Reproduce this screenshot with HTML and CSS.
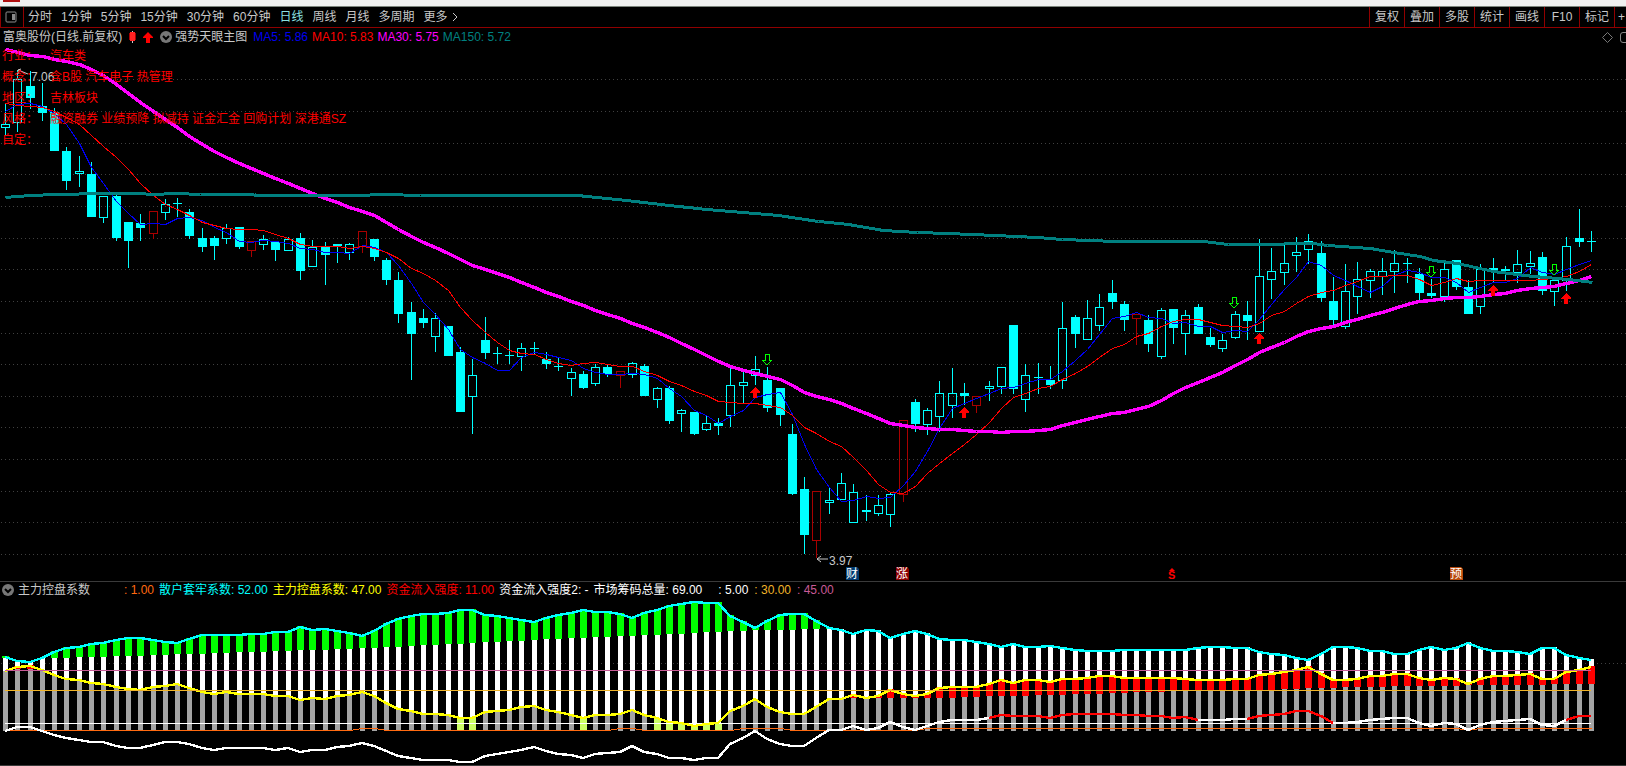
FILE: index.html
```html
<!DOCTYPE html>
<html lang="zh-CN">
<head>
<meta charset="utf-8">
<title>富奥股份 日线</title>
<link rel="stylesheet" href="styles.css">
</head>
<body>
<div class="titlebar"><span class="titlebar-logo"></span></div>

<nav class="toolbar">
  <button class="panel-toggle" type="button" aria-label="侧栏">
    <svg width="12" height="12" viewBox="0 0 12 12"><rect x="1" y="1" width="10" height="10" rx="1" fill="none" stroke="#8c8c8c"/><rect x="7" y="3" width="3" height="6" fill="#8c8c8c"/></svg>
  </button>
  <div class="periods">
    <button type="button">分时</button>
    <button type="button">1分钟</button>
    <button type="button">5分钟</button>
    <button type="button">15分钟</button>
    <button type="button">30分钟</button>
    <button type="button">60分钟</button>
    <button type="button" class="active">日线</button>
    <button type="button">周线</button>
    <button type="button">月线</button>
    <button type="button">多周期</button>
    <button type="button" class="more">更多<svg width="6" height="10" viewBox="0 0 6 10"><path d="M1 1l4 4-4 4" fill="none" stroke="#c8c8c8"/></svg></button>
  </div>
  <div class="tools">
    <button type="button">复权</button>
    <button type="button">叠加</button>
    <button type="button">多股</button>
    <button type="button">统计</button>
    <button type="button">画线</button>
    <button type="button">F10</button>
    <button type="button">标记</button>
    <button type="button" class="cut">+自选</button>
  </div>
</nav>

<main>
  <section class="main-chart">
    <header class="legend">
      <span class="stock">富奥股份(日线.前复权)</span>
      <span class="icons">
        <svg width="7" height="12" viewBox="0 0 7 12" shape-rendering="crispEdges"><path d="M3 0h1v12H3z" fill="#ccc"/><path d="M0 2h7v7H0z" fill="#a00"/><path d="M1 1h5v9H1z" fill="#f22"/></svg>
        <svg width="10" height="11" viewBox="0 0 10 11"><path d="M5 0l5 5v1H7v5H3V6H0V5z" fill="#f00"/></svg>
        <svg width="12" height="12" viewBox="0 0 12 12"><circle cx="6" cy="6" r="6" fill="#777"/><path d="M3 5l3 3 3-3" fill="none" stroke="#000" stroke-width="2"/></svg>
      </span>
      <span>强势天眼主图</span>
      <span class="averages">
        <span class="ma5">MA5: 5.86</span>
        <span class="ma10">MA10: 5.83</span>
        <span class="ma30">MA30: 5.75</span>
        <span class="ma150">MA150: 5.72</span>
      </span>
      <span class="corner">
        <svg width="11" height="11" viewBox="0 0 11 11"><path d="M5.500 .5l5 5-5 5-5-5z" fill="none" stroke="#777"/></svg>
        <svg width="6" height="11" viewBox="0 0 6 11"><path d="M6 0.500H3Q0.500 0.500 0.500 3V8Q0.500 10.500 3 10.500H6" fill="none" stroke="#888"/></svg>
      </span>
    </header>
    <svg id="candles" class="chart" viewBox="0 46 1626 535" shape-rendering="crispEdges"></svg>
    <dl class="tags">
      <dt>行业：</dt><dd>汽车类</dd>
      <dt>概念：</dt><dd>含B股 汽车电子 热管理</dd>
      <dt>地区：</dt><dd>吉林板块</dd>
      <dt>风格：</dt><dd>融资融券 业绩预降 拟减持 证金汇金 回购计划 深港通SZ</dd>
      <dt>自定：</dt><dd></dd>
    </dl>
  </section>

  <section class="sub-chart">
    <header class="legend">
      <svg width="12" height="12" viewBox="0 0 12 12"><circle cx="6" cy="6" r="6" fill="#777"/><path d="M3 5l3 3 3-3" fill="none" stroke="#000" stroke-width="2"/></svg>
      <span class="sub-name">主力控盘系数</span>
      <span class="values">
        <span class="orange">: 1.00</span>
        <span class="cyan">散户套牢系数: 52.00</span>
        <span class="yellow">主力控盘系数: 47.00</span>
        <span class="red">资金流入强度: 11.00</span>
        <span class="white">资金流入强度2: -</span>
        <span class="white">市场筹码总量: 69.00</span>
      </span>
      <span class="levels">
        <span class="white">: 5.00</span>
        <span class="gold">: 30.00</span>
        <span class="pink">: 45.00</span>
      </span>
    </header>
    <svg id="control" class="chart" viewBox="0 600 1626 165" shape-rendering="crispEdges"></svg>
  </section>
</main>
<script src="chart.js"></script>
</body>
</html>
```

FILE: styles.css
```css
* { box-sizing: border-box; }

body {
  margin: 0;
  background: #000;
  color: #c8c8c8;
  font: 12px/18px "Liberation Sans", "Noto Sans CJK SC", sans-serif;
  overflow: hidden;
}

button {
  border: 0;
  padding: 0;
  background: none;
  color: inherit;
  font: inherit;
  white-space: nowrap;
}

svg { display: block; flex: none; }

.titlebar {
  height: 7px;
  padding-left: 3px;
  background: #f0f0f0;
  border-bottom: 1px solid #7c847c;
}
.titlebar-logo {
  display: block;
  width: 17px;
  height: 2px;
  background: #b01010;
}

.toolbar {
  display: flex;
  height: 21px;
  border-bottom: 1px solid #900000;
  border-left: 1px solid #900000;
  overflow: hidden;
}
.panel-toggle {
  display: flex;
  align-items: center;
  padding: 0 6px 0 4px;
  border-right: 1px solid #900000;
}
.periods {
  display: flex;
  flex: 1;
  gap: 9px;
  padding-left: 4px;
}
.active { color: #8ce0e0; }
.more { display: flex; align-items: center; gap: 4px; }

.tools { display: flex; }
.tools button {
  width: 35px;
  border-left: 1px solid #900000;
}
.tools .cut {
  width: 12px;
  padding-left: 3px;
  overflow: hidden;
  text-align: left;
}

.legend {
  display: flex;
  align-items: center;
  height: 18px;
  white-space: nowrap;
}

.main-chart {
  position: relative;
  border-bottom: 1px solid #3a3a3a;
}
.main-chart .legend { padding-left: 3px; }
.icons {
  display: flex;
  align-items: center;
  gap: 7px;
  margin: 0 3px 0 7px;
}
.averages { display: flex; gap: 4px; margin-left: 6px; }
.ma5 { color: #0000f0; }
.ma10 { color: #f00; }
.ma30 { color: #f0f; }
.ma150 { color: #008080; }
.corner {
  display: flex;
  gap: 7px;
  margin-left: auto;
}

.chart { width: 100%; height: auto; }
.chart text { font: 12px "Liberation Sans", "Noto Sans CJK SC", sans-serif; }
.chart .dividend { font-size: 11px; font-weight: bold; }

.tags {
  position: absolute;
  top: 18px;
  left: 2px;
  display: grid;
  grid-template-columns: 48px auto;
  grid-auto-rows: 21px;
  margin: 0;
  line-height: 20px;
  color: #f00;
}
.tags dd { margin: 0; }

.sub-chart { border-bottom: 1px solid #3a3a3a; }
.sub-chart .legend { padding: 0 0 2px 2px; }
.sub-name { width: 106px; margin-left: 4px; }
.values { display: flex; gap: 5px; }
.levels { display: flex; gap: 6px; margin-left: 16px; }

.orange { color: #ff6a10; }
.cyan { color: #0ff; }
.yellow { color: #ff0; }
.red { color: #f00; }
.white { color: #fff; }
.gold { color: #f0b428; }
.pink { color: #c85a96; }
```

FILE: chart.js
```js
const COUNT = 130;
const xAt = i => Math.round(5 + 12.295 * i);

// [high, body top, body bottom, low, kind]; f = filled, h = hollow, r = red hollow
const candles = `103 124 128 135 h|70 79 123 132 h|71 86 98 109 f|83 106 113 121 f|108 112 151 151 f|147 151 181 190 f|156 171 174 187 h|162 174 217 217 f|196 196 218 223 h|195 196 238 241 f
222 222 241 268 f|214 223 228 241 f|211 211 234 239 r|199 204 213 220 h|198 203 204 217 f|209 212 236 239 f|228 238 247 252 f|236 238 246 260 f|224 228 239 244 h|227 227 247 249 f
241 241 251 257 r|235 239 245 250 h|242 242 250 261 f|237 239 251 251 h|233 238 271 280 f|240 247 267 267 h|242 247 255 285 f|244 244 246 263 f|243 244 253 260 h|231 231 247 253 r
239 239 257 261 f|258 260 280 285 f|272 280 314 323 f|302 312 334 380 f|309 318 323 328 f|313 318 337 352 h|326 326 356 356 f|347 352 412 412 f|359 375 397 434 h|317 340 353 359 f
347 353 354 364 f|340 355 356 364 f|343 348 357 371 h|342 348 349 355 f|352 359 364 369 f|358 366 367 371 f|368 372 379 396 h|371 374 388 389 f|364 367 384 386 h|365 367 374 377 f
371 371 376 388 r|362 363 375 378 h|364 366 396 396 f|387 388 400 408 h|386 388 421 424 f|409 410 414 432 h|412 412 434 435 f|416 423 430 431 h|418 423 426 435 f|368 385 416 427 h
372 382 386 403 h|356 369 376 385 h|367 380 408 412 f|388 388 415 426 f|424 434 494 495 f|477 489 535 554 f|491 491 541 558 r|488 500 503 514 h|473 483 500 500 h|484 492 523 523 h
495 510 512 521 f|495 505 514 516 h|492 494 515 527 h|420 420 495 502 r|399 402 424 432 f|408 410 425 435 h|381 393 417 432 h|368 393 406 418 h|383 393 396 405 f|396 396 406 413 r
381 386 389 401 h|367 367 387 394 h|325 325 389 394 f|364 375 400 412 h|363 377 378 394 f|366 380 385 389 f|302 328 381 389 h|315 317 334 348 f|300 318 340 340 h|294 307 326 331 h
280 293 302 309 f|301 304 320 331 f|314 314 319 345 r|315 320 344 352 f|308 310 357 359 h|309 309 328 344 f|310 315 334 355 h|304 307 334 334 f|328 337 345 347 f|334 340 349 352 h
311 314 338 339 h|301 315 321 340 f|239 276 332 332 h|248 271 280 299 h|245 263 273 285 h|237 252 256 272 h|234 241 250 264 h|241 253 298 302 f|277 301 320 325 f|264 291 327 329 h
262 279 297 314 h|269 271 281 298 h|258 271 277 295 h|250 263 272 293 h|258 263 264 283 f|268 274 293 300 f|279 293 296 298 f|263 269 297 302 h|260 260 287 290 f|280 287 314 314 f
264 269 307 314 h|258 268 270 282 f|266 269 271 280 f|250 264 273 283 h|251 263 267 274 h|252 257 291 295 f|278 280 292 306 h|237 246 281 291 h|209 238 242 247 f|231 241 242 252 f`
  .split(/[|\n]/)
  .map(s => { const [h, t, b, l, k] = s.trim().split(' '); return { h: +h, t: +t, b: +b, l: +l, k }; });

const closes = candles.map(c => (c.k === 'f' ? c.b : c.t));

function average(n, lead) {
  return closes.map((_, i) =>
    i < n - 1 ? lead[i] : Math.round(closes.slice(i - n + 1, i + 1).reduce((a, b) => a + b, 0) / n));
}

const ma5 = average(5, [111, 104, 103, 106]);
const ma10 = average(10, [103, 105, 106, 107, 111, 117, 124, 135, 146]);
const ma30 = average(30, [49, 52, 55, 56, 59, 61, 64, 69, 75, 84, 93, 102, 111, 119, 127, 136, 144, 151, 157, 163, 168, 173, 178, 183, 188, 193, 198, 202, 207]);
const ma150 = '5,197 17,196 30,195 55,194 103,193 140,193 150,194 177,193 200,194 307,195 355,195 385,194 420,195 577,195 626,200 669,205 706,209 743,212 778,215 818,221 848,224 883,230 917,232 947,233 995,235 1037,237 1062,239 1116,241 1203,241 1228,244 1277,244 1290,243 1313,243 1327,245 1370,248 1393,252 1420,256 1433,260 1457,263 1475,267 1493,271 1533,276 1557,278 1577,280 1592,282';

const rect = (x, y, w, h, fill) => `<rect x="${x}" y="${y}" width="${w}" height="${h}" fill="${fill}"/>`;
const poly = (pts, stroke, w) => `<polyline points="${pts}" fill="none" stroke="${stroke}" stroke-width="${w}" stroke-linejoin="round"/>`;
const points = (ys, from = 0) => ys.map((y, i) => `${xAt(i + from)},${y}`).join(' ');
const dots = y => `<path d="M1 ${y + 0.5}H1626" stroke="#404040" stroke-dasharray="1 3"/>`;

function drawCandles() {
  let out = '';
  for (let k = 0; k < 16; k++) out += dots(Math.floor(79.8 + 31.65 * k));
  candles.forEach((c, i) => {
    const x = xAt(i);
    const color = c.k === 'r' ? '#a80000' : '#00ffff';
    if (c.t > c.h) out += rect(x, c.h, 1, c.t - c.h, color);
    if (c.l > c.b) out += rect(x, c.b, 1, c.l - c.b, color);
    if (c.k === 'f') {
      out += rect(x - 4, c.t, 9, c.b - c.t, color);
    } else {
      out += `<path d="M${x - 4} ${c.t}h9v${c.b - c.t}h-9zm1 1v${c.b - c.t - 2}h7v-${c.b - c.t - 2}z" fill="${color}" fill-rule="evenodd"/>`;
    }
  });
  out += '<g transform="translate(.5 .5)">';
  out += poly(points(ma5), '#0000f0', 1);
  out += poly(points(ma10), '#ff0000', 1);
  out += poly(points(ma30), '#ff00ff', 3.4);
  out += poly(ma150, '#008080', 3);
  out += '</g>';

  [[755, 387], [964, 407], [1259, 333], [1493, 285], [1566, 293]].forEach(([x, y]) => {
    out += `<path d="M${x} ${y}l5 5v1h-3v5h-4v-5h-3v-1z" fill="#ff0000"/>`;
  });
  [[767, 354], [1234, 297], [1431, 266], [1554, 264]].forEach(([x, y]) => {
    out += `<path d="M${x - 2} ${y}h4v6h3l-5 5-5-5h3z" fill="none" stroke="#00ff00"/>`;
  });

  out += '<g shape-rendering="auto">';
  out += '<path d="M28 74L18 70M21 69l-3 1 1 4M828 559H817M821 556l-4 3 4 3" fill="none" stroke="#c8c8c8"/>';
  out += '<text x="31" y="81" fill="#c8c8c8">7.06</text><text x="829" y="565" fill="#c8c8c8">3.97</text>';
  [[846, '财', '#003a70'], [896, '涨', '#8b0000'], [1450, '预', '#b84a0c']].forEach(([x, s, c]) => {
    out += `<path d="M${x} 567h11l2 2v11h-13z" fill="${c}"/><text x="${x}" y="578" fill="#fff">${s}</text>`;
  });
  out += '<text x="1168" y="579" fill="#ff0000" class="dividend">S</text><path d="M1169 571l3-3 3 3z" fill="#ff0000"/>';
  out += '</g>';
  document.getElementById('candles').innerHTML = out;
}

// Vertical position of each indicator line, one value for each candle.
const retail = [657,661,662,658,652,648,647,644,643,640,638,638,640,642,643,639,635,635,635,635,634,634,632,632,627,630,629,631,633,636,631,624,619,616,614,614,613,610,610,615,616,618,620,622,618,615,613,610,612,612,614,618,613,610,606,604,602,603,603,616,622,628,621,615,614,614,621,628,630,634,630,631,638,634,631,634,639,640,640,642,644,647,644,647,647,646,648,650,651,651,651,650,650,650,650,650,650,648,647,647,648,648,652,654,655,658,660,654,647,647,648,651,651,654,654,650,647,650,648,643,648,651,651,652,654,648,648,655,658,660];
const main = [671,667,666,670,675,679,680,683,684,687,689,690,687,686,684,688,692,694,692,694,694,694,696,696,700,698,699,696,695,692,696,703,709,711,714,714,715,718,718,712,711,710,707,706,710,712,715,718,715,715,714,710,715,718,722,723,726,724,723,711,706,699,707,712,714,714,707,699,699,695,698,696,690,694,696,694,688,687,687,687,684,680,683,680,680,682,679,679,678,676,676,678,678,678,678,678,679,680,680,680,679,679,675,674,672,670,667,674,680,680,679,676,676,674,674,678,680,678,679,684,679,676,676,675,674,679,679,672,670,667];
const flow = [731,727,727,731,735,738,740,742,742,746,748,748,745,742,742,744,748,750,748,748,748,748,750,748,752,750,750,747,746,743,746,751,756,758,760,760,760,762,762,756,754,752,750,747,751,754,755,758,754,753,752,746,752,754,758,758,760,758,758,744,738,731,739,744,746,746,738,730,730,726,730,728,722,727,730,726,722,720,720,720,718,715,716,716,716,718,715,714,714,714,714,715,715,716,716,718,717,720,720,720,719,719,716,715,714,711,711,716,723,723,722,720,719,718,718,723,726,723,724,730,725,722,721,720,719,725,726,720,716,716];

// Half of the chip total, as [index, y]; the trapped-retail limit mirrors it.
const limitKeys = [[0, 669], [4, 669], [10, 671], [20, 675], [30, 679], [33, 681], [43, 687], [47, 689], [51, 691], [56, 694], [59, 696], [67, 698], [76, 698], [81, 696], [85, 695], [93, 692], [98, 690], [102, 690], [106, 688], [115, 686], [121, 685], [129, 684]];
function limitAt(i) {
  for (let k = 1; k < limitKeys.length; k++) {
    const [i1, y1] = limitKeys[k];
    const [i0, y0] = limitKeys[k - 1];
    if (i <= i1) return Math.round(y0 + (y1 - y0) * (i - i0) / (i1 - i0));
  }
  return 684;
}

function drawControl() {
  const base = 731;
  let out = dots(663);
  for (let i = 0; i < COUNT; i++) {
    const x = xAt(i);
    const top = retail[i] - 1;
    const mid = main[i];
    const low = limitAt(i);
    const high = 1327 - low;
    out += rect(x - 2, top, 5, mid - top, '#ffffff');
    if (mid > 716) out += rect(x - 3, mid, 7, base - mid, '#ccff66');
    else out += rect(x - 2, mid, 5, base - mid, '#a4a4a4');
    if (top < high - 1) out += rect(x - 3, top, 7, high - top, '#00ff00');
    if (mid < low) out += rect(x - 3, mid - 1, 7, low - mid + 1, '#ff0000');
  }
  const x1 = xAt(COUNT - 1);
  out += rect(5, 723, x1 - 5, 1, '#ffffff');

  const orange = main.map((_, i) => ([29, 30, 50, 51, 60, 61, 62, 63].includes(i) || (i > 74 && i !== 119) ? 728 : 730));
  out += '<g transform="translate(.5 .5)">' + poly(points(orange), '#ff6a10', 1) + '</g>';
  out += poly(points(retail), '#00ffff', 2.4);
  out += poly(points(main), '#ffff00', 2.4);
  out += poly(points(flow), '#ffffff', 2.4);
  [[80, 97], [101, 108], [127, 129]].forEach(([a, b]) => {
    out += poly(points(flow.slice(a, b + 1), a), '#ff0000', 2.4);
  });
  out += rect(5, 670, x1 - 5, 1, '#c85a96');
  out += rect(5, 690, x1 - 5, 1, '#f0b428');
  document.getElementById('control').innerHTML = out;
}

drawCandles();
drawControl();
```
